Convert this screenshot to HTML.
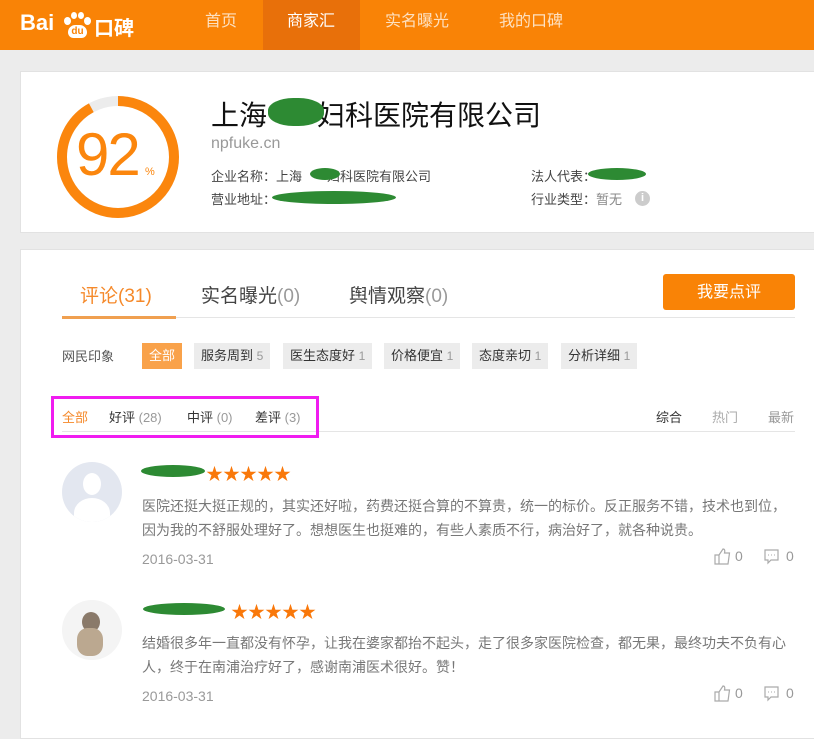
<!DOCTYPE html>
<html><head><meta charset="utf-8"><style>
*{margin:0;padding:0;box-sizing:border-box}
body{width:814px;height:727px;overflow:hidden;background:#ececec;font-family:"Liberation Sans","Noto Sans CJK SC",sans-serif;position:relative;color:#333}
.a{position:absolute;white-space:nowrap}
.hdr{position:absolute;left:0;top:0;width:814px;height:50px;background:#f98306}
.nav{position:absolute;top:0;height:50px;line-height:44px;color:#fde0c0;font-size:16px}
.card{position:absolute;left:20px;width:800px;background:#fff;border:1px solid #e2e2e2}
.tag{position:absolute;top:343px;height:26px;line-height:26px;background:#ececec;font-size:13px;color:#333;padding:0 7px}
.tag i{font-style:normal;color:#999;font-size:12px}
.blob{position:absolute;background:#2d8a33;border-radius:50%}
.star{color:#f9780a;font-size:17px;letter-spacing:0}
.txt{font-size:14px;color:#777}
.date{font-size:14px;color:#999}
</style></head><body>
<div class="hdr"></div>
<div class="a" style="left:20px;top:10px;font-size:22px;font-weight:bold;color:#fff">Bai</div>
<div class="a" style="left:62px;top:11px;width:30px;height:28px;color:#fff;font-size:11px;font-weight:bold;text-align:center;line-height:38px">
<span style="position:absolute;left:2px;top:6px;width:7px;height:8px;background:#fff;border-radius:50%"></span>
<span style="position:absolute;left:9px;top:1px;width:6px;height:7px;background:#fff;border-radius:50%"></span>
<span style="position:absolute;left:16px;top:1px;width:6px;height:7px;background:#fff;border-radius:50%"></span>
<span style="position:absolute;left:22px;top:6px;width:7px;height:8px;background:#fff;border-radius:50%"></span>
<span style="position:absolute;left:6px;top:14px;width:19px;height:13px;background:#fff;border-radius:8px 8px 6px 6px;color:#f98306;line-height:13px;font-size:10px">du</span></div>
<div class="a" style="left:94px;top:12px;font-size:20px;font-weight:bold;color:#fff">口碑</div>
<div class="nav" style="left:263px;width:97px;background:#e8700a"></div>
<div class="nav" style="left:205px">首页</div>
<div class="nav" style="left:287px;color:#fff">商家汇</div>
<div class="nav" style="left:385px">实名曝光</div>
<div class="nav" style="left:499px">我的口碑</div>

<div class="card" style="top:71px;height:162px"></div>
<svg class="a" style="left:54px;top:92px" width="130" height="130" viewBox="0 0 130 130">
<circle cx="64" cy="65" r="56" fill="none" stroke="#ececec" stroke-width="10"/>
<circle cx="64" cy="65" r="56" fill="none" stroke="#fb860d" stroke-width="10" stroke-dasharray="323.7 351.9" transform="rotate(-90 64 65)"/>
</svg>
<div class="a" style="left:76px;top:120px;font-size:60px;color:#fb860d;line-height:70px;letter-spacing:-2px">92</div>
<div class="a" style="left:145px;top:166px;font-size:11px;color:#fb860d">%</div>
<div class="a" style="left:211px;top:94px;font-size:28px;color:#111">上海<span style="display:inline-block;width:50px"></span>妇科医院有限公司</div>
<div class="blob" style="left:268px;top:98px;width:56px;height:28px;border-radius:45%"></div>
<div class="a" style="left:211px;top:135px;font-size:16px;color:#999">npfuke.cn</div>
<div class="a" style="left:211px;top:166px;font-size:13px;color:#444">企业名称：上海<span style="display:inline-block;width:25px"></span>妇科医院有限公司</div>
<div class="blob" style="left:310px;top:168px;width:30px;height:12px"></div>
<div class="a" style="left:211px;top:189px;font-size:13px;color:#444">营业地址：</div>
<div class="blob" style="left:272px;top:191px;width:124px;height:13px"></div>
<div class="a" style="left:531px;top:166px;font-size:13px;color:#444">法人代表：</div>
<div class="blob" style="left:588px;top:168px;width:58px;height:12px"></div>
<div class="a" style="left:531px;top:189px;font-size:13px;color:#444">行业类型：<span style="color:#888">暂无</span></div>
<div class="a" style="left:635px;top:191px;width:15px;height:15px;border-radius:50%;background:#ccc;color:#fff;font-size:11px;text-align:center;line-height:15px;font-weight:bold">i</div>

<div class="card" style="top:249px;height:490px"></div>
<div class="a" style="left:80px;top:281px;font-size:19px;color:#f5892a">评论<span>(31)</span></div>
<div class="a" style="left:201px;top:281px;font-size:19px;color:#444">实名曝光<span style="color:#999">(0)</span></div>
<div class="a" style="left:349px;top:281px;font-size:19px;color:#444">舆情观察<span style="color:#999">(0)</span></div>
<div class="a" style="left:62px;top:317px;width:733px;height:1px;background:#e5e5e5"></div>
<div class="a" style="left:62px;top:316px;width:114px;height:3px;background:#f0a050"></div>
<div class="a" style="left:663px;top:274px;width:132px;height:36px;background:#f98306;border-radius:3px;color:#fff;font-size:16px;text-align:center;line-height:38px">我要点评</div>

<div class="a" style="left:62px;top:346px;font-size:13px;color:#555">网民印象</div>
<div class="tag" style="left:142px;background:#f9a24a;color:#fff">全部</div>
<div class="tag" style="left:194px">服务周到 <i>5</i></div>
<div class="tag" style="left:283px">医生态度好 <i>1</i></div>
<div class="tag" style="left:384px">价格便宜 <i>1</i></div>
<div class="tag" style="left:472px">态度亲切 <i>1</i></div>
<div class="tag" style="left:561px">分析详细 <i>1</i></div>

<div class="a" style="left:62px;top:431px;width:733px;height:1px;background:#e5e5e5"></div>
<div class="a" style="left:62px;top:407px;font-size:13px;color:#f5892a">全部</div>
<div class="a" style="left:109px;top:407px;font-size:13px;color:#333">好评 <span style="color:#999">(28)</span></div>
<div class="a" style="left:187px;top:407px;font-size:13px;color:#333">中评 <span style="color:#999">(0)</span></div>
<div class="a" style="left:255px;top:407px;font-size:13px;color:#333">差评 <span style="color:#999">(3)</span></div>
<div class="a" style="left:51px;top:396px;width:268px;height:42px;border:3px solid #f01cf0"></div>
<div class="a" style="left:656px;top:407px;font-size:13px;color:#333">综合</div>
<div class="a" style="left:712px;top:407px;font-size:13px;color:#aaa">热门</div>
<div class="a" style="left:768px;top:407px;font-size:13px;color:#999">最新</div>

<div class="a" style="left:62px;top:462px;width:60px;height:60px;border-radius:50%;background:#e3e7f0;overflow:hidden">
<div style="position:absolute;left:21px;top:11px;width:18px;height:22px;border-radius:50%;background:#fff"></div>
<div style="position:absolute;left:12px;top:36px;width:36px;height:30px;border-radius:50% 50% 0 0;background:#fff"></div></div>
<div class="blob" style="left:141px;top:465px;width:64px;height:12px"></div>
<div class="a star" style="left:206px;top:460px">★★★★★</div>
<div class="a txt" style="left:142px;top:494px;line-height:24px">医院还挺大挺正规的，其实还好啦，药费还挺合算的不算贵，统一的标价。反正服务不错，技术也到位，<br>因为我的不舒服处理好了。想想医生也挺难的，有些人素质不行，病治好了，就各种说贵。</div>
<div class="a date" style="left:142px;top:551px">2016-03-31</div>
<svg class="a" style="left:714px;top:547px" width="80" height="18" viewBox="0 0 80 18">
<path d="M1 8h4v9H1zM5 8l4-6c2 0 2 2 1.5 4h5l-1.5 11H5" fill="none" stroke="#aaa" stroke-width="1.2"/>
<text x="21" y="14" font-size="14" fill="#999" font-family="Liberation Sans">0</text>
<path d="M51 3h13v10h-7l-3 3v-3h-3z" fill="none" stroke="#aaa" stroke-width="1.2"/>
<path d="M54 8h1M57 8h1M60 8h1" stroke="#aaa"/>
<text x="72" y="14" font-size="14" fill="#999" font-family="Liberation Sans">0</text></svg>

<div class="a" style="left:62px;top:600px;width:60px;height:60px;border-radius:50%;background:#f4f4f4;overflow:hidden">
<div style="position:absolute;left:20px;top:12px;width:18px;height:20px;border-radius:50%;background:#8a7a6a"></div>
<div style="position:absolute;left:15px;top:28px;width:26px;height:28px;border-radius:40%;background:#bba890"></div></div>
<div class="blob" style="left:143px;top:603px;width:82px;height:12px"></div>
<div class="a star" style="left:231px;top:598px">★★★★★</div>
<div class="a txt" style="left:142px;top:631px;line-height:24px">结婚很多年一直都没有怀孕，让我在婆家都抬不起头，走了很多家医院检查，都无果，最终功夫不负有心<br>人，终于在南浦治疗好了，感谢南浦医术很好。赞！</div>
<div class="a date" style="left:142px;top:688px">2016-03-31</div>
<svg class="a" style="left:714px;top:684px" width="80" height="18" viewBox="0 0 80 18">
<path d="M1 8h4v9H1zM5 8l4-6c2 0 2 2 1.5 4h5l-1.5 11H5" fill="none" stroke="#aaa" stroke-width="1.2"/>
<text x="21" y="14" font-size="14" fill="#999" font-family="Liberation Sans">0</text>
<path d="M51 3h13v10h-7l-3 3v-3h-3z" fill="none" stroke="#aaa" stroke-width="1.2"/>
<path d="M54 8h1M57 8h1M60 8h1" stroke="#aaa"/>
<text x="72" y="14" font-size="14" fill="#999" font-family="Liberation Sans">0</text></svg>
</body></html>
